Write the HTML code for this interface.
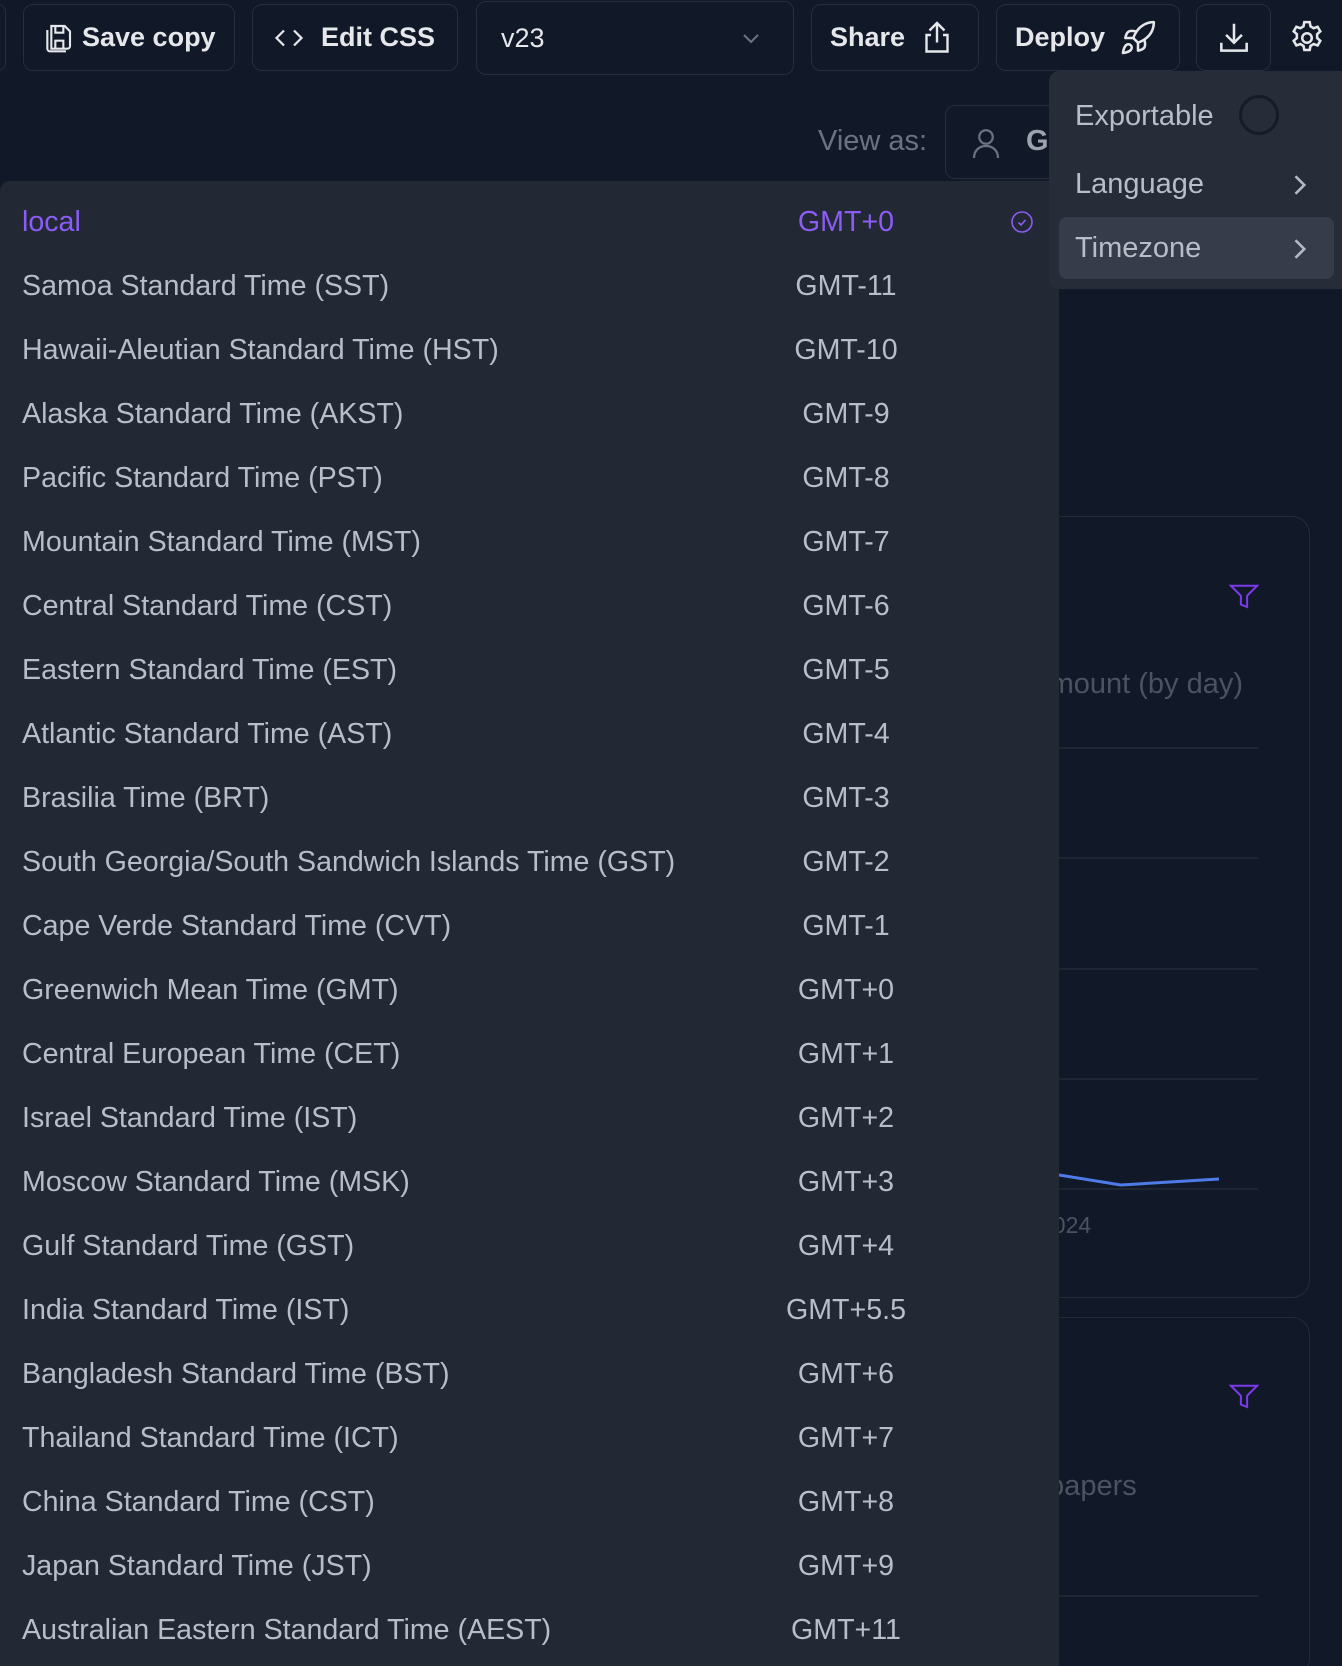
<!DOCTYPE html>
<html style="width:1342px;height:1666px;overflow:hidden"><head><style>
*{box-sizing:border-box;margin:0;padding:0}
body{width:1342px;height:1666px;background:#111827;font-family:"Liberation Sans",sans-serif;position:relative;overflow:hidden;color:#d1d5db}
.btn{position:absolute;top:4px;height:67px;border:1.5px solid #262d3b;border-radius:10px;display:flex;align-items:center;font-size:27px;font-weight:bold;color:#e5e7eb}
.card{position:absolute;border:1.5px solid #252b38;border-radius:18px}
.grid{position:absolute;left:1059px;width:199px;height:2px;background:#1e2533}
#dd{position:absolute;left:0;top:181px;width:1059px;height:1485px;background:#222834;border-radius:10px 0 0 0}
.row{position:absolute;left:0;width:1059px;height:64px;display:flex;align-items:center;font-size:28.6px;color:#b8bec9}
.row .n{position:absolute;left:22px}
.row .g{position:absolute;left:746px;width:200px;text-align:center}
#menu{position:absolute;left:1049px;top:71px;width:293px;height:218px;background:#262c38;border-radius:10px 0 0 10px}
.mi{position:absolute;left:26px;font-size:29px;color:#b8bec9}
</style></head><body>
<div class="btn" style="left:-10px;width:16px"></div>
<div class="btn" style="left:23px;width:212px;padding-left:18px">
<svg width="32" height="32" viewBox="0 0 24 24" fill="none" stroke="#e5e7eb" stroke-width="1.6"><path d="M7 3h10l4 4v11a2 2 0 0 1-2 2H7z"/><path d="M10 3v5h6V3M10 20v-6h6v6"/><path d="M4 6v14a2 2 0 0 0 2 2h12"/></svg><span style="margin-left:8px">Save copy</span></div>
<div class="btn" style="left:252px;width:206px;padding-left:18px">
<svg width="36" height="30" viewBox="0 0 24 24" fill="none" stroke="#e5e7eb" stroke-width="1.8"><path d="M8 6l-6 6 6 6M16 6l6 6-6 6"/></svg><span style="margin-left:14px">Edit CSS</span></div>
<div class="btn" style="left:476px;top:1px;height:74px;width:318px;padding-left:24px;font-weight:normal">v23
<svg style="position:absolute;right:30px" width="24" height="24" viewBox="0 0 24 24" fill="none" stroke="#6b7280" stroke-width="2"><path d="M5 9l7 7 7-7"/></svg></div>
<div class="btn" style="left:811px;width:168px;padding-left:18px">Share
<svg style="margin-left:14px" width="36" height="40" viewBox="0 0 24 24" fill="none" stroke="#e5e7eb" stroke-width="1.6"><path d="M12 2v13M7 7l5-5 5 5M8 10H5v11h14V10h-3"/></svg></div>
<div class="btn" style="left:996px;width:184px;padding-left:18px">Deploy
<svg style="margin-left:14px" width="38" height="38" viewBox="0 0 24 24" fill="none" stroke="#e5e7eb" stroke-width="1.6" stroke-linejoin="round"><path d="M4.5 16.5c-1.5 1.26-2 5-2 5s3.74-.5 5-2c.71-.84.7-2.13-.09-2.91a2.18 2.18 0 0 0-2.91-.09z"/><path d="M12 15l-3-3a22 22 0 0 1 2-3.95A12.88 12.88 0 0 1 22 2c0 2.72-.78 7.5-6 11a22.35 22.35 0 0 1-4 2z"/><path d="M9 12H4s.55-3.03 2-4c1.62-1.08 5 0 5 0M12 15v5s3.03-.55 4-2c1.080-1.62 0-5 0-5"/></svg></div>
<div class="btn" style="left:1196px;width:75px;justify-content:center">
<svg width="38" height="38" viewBox="0 0 24 24" fill="none" stroke="#e5e7eb" stroke-width="1.6"><path d="M12 3v12M7 10l5 5 5-5M4 15v5h16v-5"/></svg></div>
<svg style="position:absolute;left:1288px;top:19px" width="38" height="38" viewBox="0 0 24 24" fill="none" stroke="#e5e7eb" stroke-width="1.6"><circle cx="12" cy="12" r="3"/><path d="M10.3 2h3.4l.5 2.6 2 1.2 2.5-.9 1.7 2.9-2 1.8v2.4l2 1.8-1.7 2.9-2.5-.9-2 1.2-.5 2.6h-3.4l-.5-2.6-2-1.2-2.5.9-1.7-2.9 2-1.8v-2.4l-2-1.8 1.7-2.9 2.5.9 2-1.2z"/></svg>

<div style="position:absolute;left:818px;top:125px;font-size:29px;color:#6b7280">View as:</div>
<div style="position:absolute;left:945px;top:105px;width:140px;height:74px;border:1.5px solid #262d3b;border-radius:10px"></div>
<svg style="position:absolute;left:968px;top:124px" width="36" height="38" viewBox="0 0 24 24" fill="none" stroke="#6b7280" stroke-width="1.5"><circle cx="12" cy="8" r="4.5"/><path d="M4 22c0-5 3.5-8 8-8s8 3 8 8"/></svg>
<div style="position:absolute;left:1026px;top:125px;font-size:29px;color:#9ca3af;font-weight:bold">Gl</div>

<div class="card" style="left:980px;top:516px;width:330px;height:782px"></div>
<div class="card" style="left:980px;top:1317px;width:330px;height:360px"></div>
<svg style="position:absolute;left:1228px;top:582px" width="32" height="30" viewBox="0 0 24 24" fill="none" stroke="#7c3aed" stroke-width="1.6"><path d="M1.5 3h21l-8 8v9l-5-2v-7z"/></svg>
<svg style="position:absolute;left:1228px;top:1382px" width="32" height="30" viewBox="0 0 24 24" fill="none" stroke="#7c3aed" stroke-width="1.6"><path d="M1.5 3h21l-8 8v9l-5-2v-7z"/></svg>
<div style="position:absolute;left:1000px;top:668px;font-size:29px;color:#4b5261;width:243px;text-align:right">mount (by day)</div>
<div class="grid" style="top:747px"></div><div class="grid" style="top:857px"></div><div class="grid" style="top:968px"></div><div class="grid" style="top:1078px"></div><div class="grid" style="top:1188px"></div>
<svg style="position:absolute;left:1059px;top:1170px" width="170" height="20"><path d="M0 5L62 15L160 9" fill="none" stroke="#4f7be8" stroke-width="3"/></svg>
<div style="position:absolute;left:1040px;top:1212px;font-size:23px;color:#4b5261">2024</div>
<div style="position:absolute;left:1040px;top:1470px;font-size:29px;color:#4b5261">.papers</div>
<div class="grid" style="top:1595px"></div>

<div id="dd"></div>
<div class="row" style="top:190px;color:#8b5cf6"><span class="n">local</span><span class="g">GMT+0</span>
<svg style="position:absolute;left:1010px" width="24" height="24" viewBox="0 0 24 24" fill="none" stroke="#8b5cf6" stroke-width="1.6"><circle cx="12" cy="12" r="10"/><path d="M8.5 12.5l2.5 2.5 4.5-5"/></svg></div>
<div class="row" style="top:254px"><span class="n">Samoa Standard Time (SST)</span><span class="g">GMT-11</span></div>
<div class="row" style="top:318px"><span class="n">Hawaii-Aleutian Standard Time (HST)</span><span class="g">GMT-10</span></div>
<div class="row" style="top:382px"><span class="n">Alaska Standard Time (AKST)</span><span class="g">GMT-9</span></div>
<div class="row" style="top:446px"><span class="n">Pacific Standard Time (PST)</span><span class="g">GMT-8</span></div>
<div class="row" style="top:510px"><span class="n">Mountain Standard Time (MST)</span><span class="g">GMT-7</span></div>
<div class="row" style="top:574px"><span class="n">Central Standard Time (CST)</span><span class="g">GMT-6</span></div>
<div class="row" style="top:638px"><span class="n">Eastern Standard Time (EST)</span><span class="g">GMT-5</span></div>
<div class="row" style="top:702px"><span class="n">Atlantic Standard Time (AST)</span><span class="g">GMT-4</span></div>
<div class="row" style="top:766px"><span class="n">Brasilia Time (BRT)</span><span class="g">GMT-3</span></div>
<div class="row" style="top:830px"><span class="n">South Georgia/South Sandwich Islands Time (GST)</span><span class="g">GMT-2</span></div>
<div class="row" style="top:894px"><span class="n">Cape Verde Standard Time (CVT)</span><span class="g">GMT-1</span></div>
<div class="row" style="top:958px"><span class="n">Greenwich Mean Time (GMT)</span><span class="g">GMT+0</span></div>
<div class="row" style="top:1022px"><span class="n">Central European Time (CET)</span><span class="g">GMT+1</span></div>
<div class="row" style="top:1086px"><span class="n">Israel Standard Time (IST)</span><span class="g">GMT+2</span></div>
<div class="row" style="top:1150px"><span class="n">Moscow Standard Time (MSK)</span><span class="g">GMT+3</span></div>
<div class="row" style="top:1214px"><span class="n">Gulf Standard Time (GST)</span><span class="g">GMT+4</span></div>
<div class="row" style="top:1278px"><span class="n">India Standard Time (IST)</span><span class="g">GMT+5.5</span></div>
<div class="row" style="top:1342px"><span class="n">Bangladesh Standard Time (BST)</span><span class="g">GMT+6</span></div>
<div class="row" style="top:1406px"><span class="n">Thailand Standard Time (ICT)</span><span class="g">GMT+7</span></div>
<div class="row" style="top:1470px"><span class="n">China Standard Time (CST)</span><span class="g">GMT+8</span></div>
<div class="row" style="top:1534px"><span class="n">Japan Standard Time (JST)</span><span class="g">GMT+9</span></div>
<div class="row" style="top:1598px"><span class="n">Australian Eastern Standard Time (AEST)</span><span class="g">GMT+11</span></div>

<div id="menu">
<div class="mi" style="top:29px">Exportable</div>
<div style="position:absolute;left:190px;top:24px;width:40px;height:40px;border-radius:50%;border:3px solid #161b25"></div>
<div class="mi" style="top:97px">Language</div>
<svg style="position:absolute;left:240px;top:100px" width="20" height="28" viewBox="0 0 10 16" fill="none" stroke="#b4bac5" stroke-width="1.5"><path d="M3 3l5 5-5 5"/></svg>
<div style="position:absolute;left:10px;top:146px;width:275px;height:62px;background:#363c4a;border-radius:8px"></div>
<div class="mi" style="top:161px">Timezone</div>
<svg style="position:absolute;left:240px;top:164px" width="20" height="28" viewBox="0 0 10 16" fill="none" stroke="#b4bac5" stroke-width="1.5"><path d="M3 3l5 5-5 5"/></svg>
</div>
</body></html>
